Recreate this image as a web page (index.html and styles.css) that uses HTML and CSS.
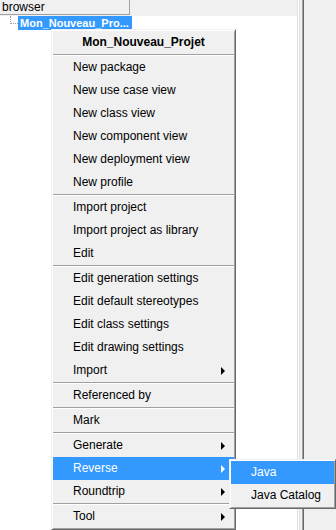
FILE: index.html
```html
<!DOCTYPE html>
<html lang="fr">
<head>
  <meta charset="UTF-8" />
  <title>browser</title>
  <link rel="stylesheet" href="styles.css">
</head>
<body>

<div class="window">
  <!-- Panneau browser -->
  <div class="browser">
    <div class="header">
      <div class="col-head">browser</div>
    </div>
    <div class="tree">
      <div class="node">
        <span class="branch"></span>
        <span class="label selected">Mon_Nouveau_Pro...</span>
      </div>
    </div>
  </div>
  <div class="splitter"></div>
  <div class="side"></div>
</div>

<!-- Menu contextuel -->
<div class="menu">
  <div class="title">Mon_Nouveau_Projet</div>
  <div class="sep"></div>
  <div class="item">New package</div>
  <div class="item">New use case view</div>
  <div class="item">New class view</div>
  <div class="item">New component view</div>
  <div class="item">New deployment view</div>
  <div class="item">New profile</div>
  <div class="sep"></div>
  <div class="item">Import project</div>
  <div class="item">Import project as library</div>
  <div class="item">Edit</div>
  <div class="sep"></div>
  <div class="item">Edit generation settings</div>
  <div class="item">Edit default stereotypes</div>
  <div class="item">Edit class settings</div>
  <div class="item">Edit drawing settings</div>
  <div class="item sub">Import <span class="arrow"></span></div>
  <div class="sep"></div>
  <div class="item">Referenced by</div>
  <div class="sep"></div>
  <div class="item">Mark</div>
  <div class="sep"></div>
  <div class="item sub">Generate <span class="arrow"></span></div>
  <div class="item sub active">Reverse <span class="arrow"></span></div>
  <div class="item sub">Roundtrip <span class="arrow"></span></div>
  <div class="sep"></div>
  <div class="item sub">Tool <span class="arrow"></span></div>
</div>

<!-- Sous-menu Reverse -->
<div class="menu submenu">
  <div class="item active">Java</div>
  <div class="item">Java Catalog</div>
</div>

</body>
</html>
```

FILE: styles.css
```css
body {
  margin: 0;
  background-color: #ffffff;
  font-family: "Liberation Sans", Arial, sans-serif;
  font-size: 12px;
  color: #000;
  overflow: hidden;
}
.window {
  display: flex;
  height: 530px;
}
.browser {
  width: 297px;
  display: flex;
  flex-direction: column;
}
.header {
  height: 16px;
  background-color: #f0f0f0;
}
.col-head {
  width: 130px;
  height: 15px;
  line-height: 14px;
  padding-left: 2px;
  box-sizing: border-box;
  border-right: 1px solid #a0a0a0;
  border-bottom: 1px solid #a0a0a0;
  font-size: 12px;
}
.tree {
  flex: 1;
  background-color: #ffffff;
}
.node {
  display: flex;
  align-items: flex-start;
  height: 14px;
}
.branch {
  margin-left: 10px;
  width: 7px;
  height: 7px;
  border-left: 1px dotted #a0a0a0;
  border-bottom: 1px dotted #a0a0a0;
}
.label {
  font-size: 11px;
  font-weight: bold;
  line-height: 14px;
  padding: 0 3px 0 2px;
}
.selected {
  background-color: #3399ff;
  color: #ffffff;
}
.splitter {
  width: 7px;
  background: linear-gradient(to right,
    #e3e3e3 0 1px, #ffffff 1px 2px, #e3e3e3 2px 3px,
    #f0f0f0 3px 5px, #a0a0a0 5px 6px, #696969 6px 7px);
}
.side {
  flex: 1;
  background-color: #f0f0f0;
}

/* menu */
.menu {
  position: absolute;
  left: 51px;
  top: 29px;
  width: 185px;
  box-sizing: border-box;
  background-color: #f0f0f0;
  border: 1px solid;
  border-color: #f0f0f0 #696969 #696969 #f0f0f0;
  box-shadow: inset 1px 1px 0 #ffffff, inset -1px -1px 0 #a0a0a0;
  padding: 1px;
}
.title {
  height: 23px;
  line-height: 23px;
  text-align: center;
  font-weight: bold;
}
.item {
  height: 23px;
  line-height: 23px;
  padding-left: 20px;
  display: flex;
  align-items: center;
  justify-content: space-between;
  padding-right: 9px;
}
.active {
  background-color: #3399ff;
  color: #ffffff;
}
.sep {
  height: 0;
  border-top: 1px solid #a0a0a0;
  border-bottom: 1px solid #ffffff;
}
.arrow {
  width: 0;
  height: 0;
  border-left: 4px solid #000;
  border-top: 4px solid transparent;
  border-bottom: 4px solid transparent;
}
.active .arrow {
  border-left-color: #ffffff;
}
.submenu {
  left: 229px;
  top: 459px;
  width: 107px;
}
```
